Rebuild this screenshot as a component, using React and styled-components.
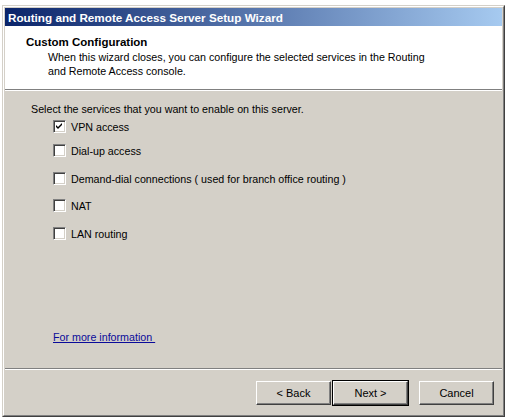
import React from "react";
import styled, { createGlobalStyle } from "styled-components";

const Global = createGlobalStyle`
  html, body { margin: 0; padding: 0; background: #ffffff; }
  body { font-family: "Liberation Sans", Arial, sans-serif; font-size: 10.7px; color: #000; }
`;

const Page = styled.div`
  width: 509px;
  height: 420px;
  padding: 5px 0 0 2px;
  box-sizing: border-box;
  overflow: hidden;
`;

const Window = styled.div`
  width: 503px;
  height: 412px;
  box-sizing: border-box;
  background: #d4d0c8;
  border-top: 1px solid #d4d0c8;
  border-left: 1px solid #d4d0c8;
  border-right: 1px solid #404040;
  border-bottom: 1px solid #404040;
  display: flex;
  flex-direction: column;
`;

const Frame = styled.div`
  flex: 1;
  display: flex;
  flex-direction: column;
  border-top: 1px solid #ffffff;
  border-left: 1px solid #ffffff;
  border-right: 1px solid #808080;
  border-bottom: 1px solid #808080;
  padding: 1px;
  min-height: 0;
`;

const TitleBar = styled.div`
  height: 18px;
  flex: none;
  display: flex;
  align-items: center;
  padding-left: 3px;
  background: linear-gradient(to right, #0a246a, #a6caf0);
  color: #ffffff;
  font-weight: bold;
  font-size: 11.7px;
`;

const Header = styled.div`
  flex: none;
  height: 64px;
  background: #ffffff;
  padding: 9px 0 0 21px;
  box-sizing: border-box;
  border-bottom: 1px solid #808080;
  box-shadow: 0 1px 0 #ffffff;
`;

const HeaderTitle = styled.div`
  font-weight: bold;
  font-size: 11.5px;
  line-height: 15px;
`;

const HeaderText = styled.div`
  padding-left: 22px;
  line-height: 14px;
  width: 385px;
`;

const Body = styled.div`
  flex: 1;
  display: flex;
  flex-direction: column;
  padding: 12px 0 0 26px;
  border-bottom: 1px solid #808080;
  box-shadow: 0 1px 0 #ffffff;
`;

const Prompt = styled.div`
  line-height: 14px;
`;

const Options = styled.div`
  display: flex;
  flex-direction: column;
  padding-left: 22px;
  margin-top: 4px;
`;

const Option = styled.label`
  display: flex;
  align-items: center;
  gap: 5px;
  height: 13px;
  margin-top: ${(p) => p.$gap}px;
`;

const Box = styled.span`
  width: 13px;
  height: 13px;
  box-sizing: border-box;
  background: #ffffff;
  border-top: 1px solid #808080;
  border-left: 1px solid #808080;
  border-right: 1px solid #ffffff;
  border-bottom: 1px solid #ffffff;
  box-shadow: inset 1px 1px 0 #404040, inset -1px -1px 0 #d4d0c8;
  display: flex;
  align-items: center;
  justify-content: center;
  flex: none;
`;

const Link = styled.a`
  margin-top: auto;
  margin-bottom: 25px;
  margin-left: 22px;
  color: #0a0a9a;
  text-decoration: underline;
  cursor: pointer;
  align-self: flex-start;
`;

const Footer = styled.div`
  flex: none;
  height: 45px;
  display: flex;
  align-items: flex-start;
  padding: 12px 0 0 251px;
  box-sizing: border-box;
`;

const Button = styled.button`
  width: 75px;
  height: 24px;
  box-sizing: border-box;
  margin-left: ${(p) => p.$ml || 0}px;
  background: #d4d0c8;
  font-family: "Liberation Sans", Arial, sans-serif;
  font-size: 11px;
  color: #000;
  padding: 0;
  border-top: 1px solid #ffffff;
  border-left: 1px solid #ffffff;
  border-right: 1px solid #404040;
  border-bottom: 1px solid #404040;
  box-shadow: inset -1px -1px 0 #808080;
  outline: ${(p) => (p.$default ? "1px solid #000" : "none")};
  outline-offset: 0;
`;

const Check = () => (
  <svg width="7" height="7" viewBox="0 0 7 7">
    <path d="M0 2 L2 4 L6 0 L6 2 L2 6 L0 4 Z" fill="#000" />
  </svg>
);

const options = [
  { label: "VPN access", checked: true, gap: 0 },
  { label: "Dial-up access", gap: 11 },
  { label: "Demand-dial connections ( used for branch office routing )", gap: 15 },
  { label: "NAT", gap: 14 },
  { label: "LAN routing", gap: 15 },
];

export default function App() {
  return (
    <>
      <Global />
      <Page>
        <Window>
          <Frame>
            <TitleBar>Routing and Remote Access Server Setup Wizard</TitleBar>
            <Header>
              <HeaderTitle>Custom Configuration</HeaderTitle>
              <HeaderText>
                When this wizard closes, you can configure the selected services in the Routing
                and Remote Access console.
              </HeaderText>
            </Header>
            <Body>
              <Prompt>Select the services that you want to enable on this server.</Prompt>
              <Options>
                {options.map((o) => (
                  <Option key={o.label} $gap={o.gap}>
                    <Box>{o.checked && <Check />}</Box>
                    {o.label}
                  </Option>
                ))}
              </Options>
              <Link>For more information&nbsp;</Link>
            </Body>
            <Footer>
              <Button>&lt; Back</Button>
              <Button $ml={2} $default>Next &gt;</Button>
              <Button $ml={11}>Cancel</Button>
            </Footer>
          </Frame>
        </Window>
      </Page>
    </>
  );
}
